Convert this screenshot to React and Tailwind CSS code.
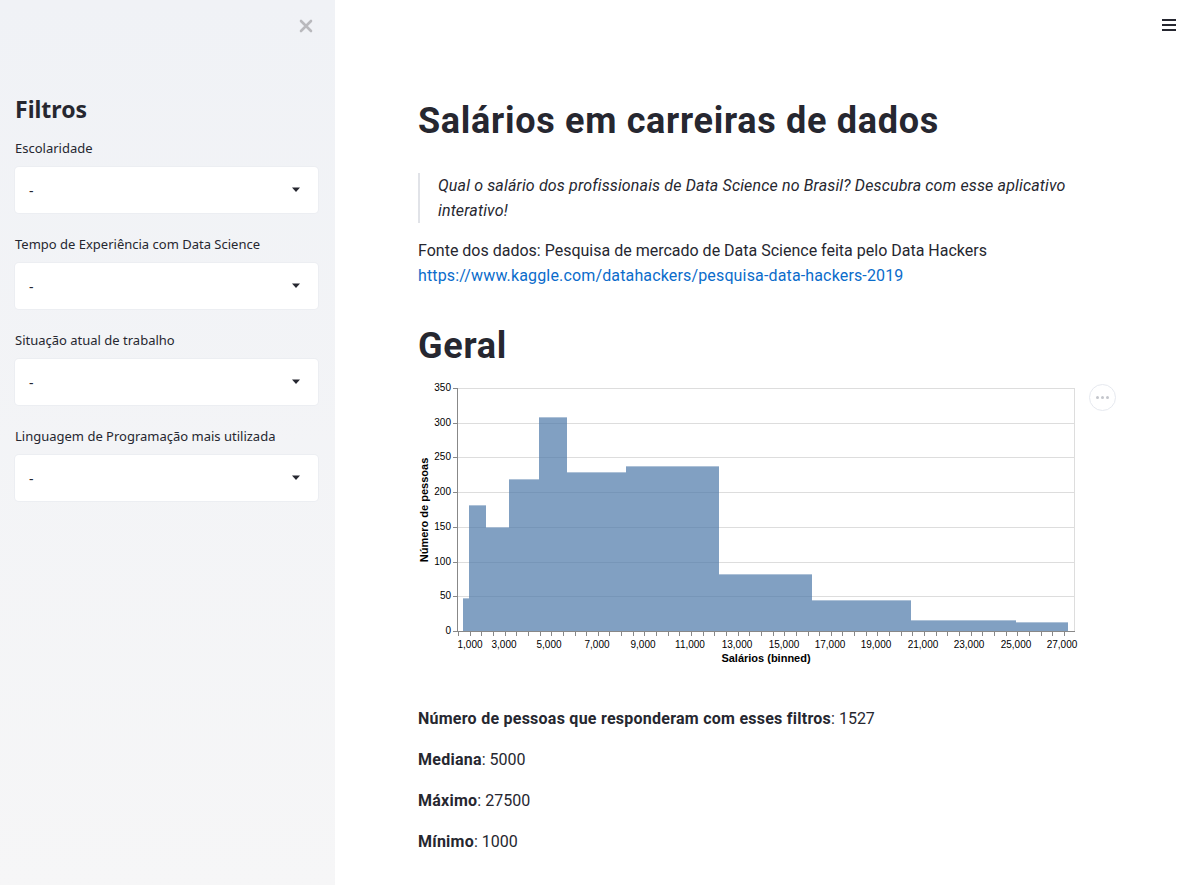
import React from 'react'

const bars = [
  [463, 469, 48],
  [469, 486, 181],
  [486, 509, 150],
  [509, 539, 219],
  [539, 567, 308],
  [567, 626, 229],
  [626, 719, 237],
  [719, 812, 82],
  [812, 911, 45],
  [911, 1016, 16],
  [1016, 1068, 13],
]

const ox = 418
const oy = 380
const y0 = 631 - oy
const ky = 243 / 350
const px = (x) => x - ox

const Select = ({ label }) => (
  <div className="flex flex-col">
    <label className="text-[13px] text-[#262730] leading-4 mb-[11px]">{label}</label>
    <div className="h-[46px] bg-white rounded-[4px] flex items-center justify-between pl-[14px] pr-[17px] text-[14px] text-[#262730] shadow-[0_0_0_1px_#eceef2]">
      <span>-</span>
      <svg width="10" height="6" viewBox="0 0 10 6"><path d="M1 0.5h8L5 5z" fill="#262730" /></svg>
    </div>
  </div>
)

const Chart = () => {
  const grid = [0, 50, 100, 150, 200, 250, 300, 350]
  const ticks = []
  for (let i = 0; i <= 52; i++) ticks.push(Math.round(458 + i * 11.65) + 0.5)
  const labels = [1000, 3000, 5000, 7000, 9000, 11000, 13000, 15000, 17000, 19000, 21000, 23000, 25000, 27000]
  const lx = [470, 504, 549, 597, 643, 690, 737, 784, 830, 876, 923, 969, 1016, 1062]
  return (
    <div className="relative h-[290px] mt-[10px]">
      <svg width="700" height="290" className="block" style={{ fontFamily: 'Liberation Sans, Arial, sans-serif' }}>
        {grid.map((v) => (
          <line key={v} x1={px(457)} x2={px(1075)} y1={Math.round(y0 - v * ky) + 0.5} y2={Math.round(y0 - v * ky) + 0.5} stroke="#ddd" strokeWidth="1" />
        ))}
        <line x1={px(1074.5)} x2={px(1074.5)} y1={y0 - 350 * ky} y2={y0} stroke="#ddd" />
        {bars.map(([a, b, v], i) => (
          <g key={i}>
            <rect x={px(a)} y={Math.round(y0 - v * ky)} width={b - a} height={y0 - Math.round(y0 - v * ky)} fill="#4c78a8" fillOpacity="0.7" />
            <line x1={px(a)} x2={px(b)} y1={Math.round(y0 - v * ky) + 0.5} y2={Math.round(y0 - v * ky) + 0.5} stroke="#fff" strokeOpacity="0.35" />
          </g>
        ))}
        <line x1={px(457.5)} x2={px(457.5)} y1={y0 - 350 * ky} y2={y0} stroke="#888" />
        <line x1={px(457)} x2={px(1075)} y1={y0 + 0.5} y2={y0 + 0.5} stroke="#888" />
        {grid.map((v) => (
          <g key={v}>
            <line x1={px(453)} x2={px(457)} y1={Math.round(y0 - v * ky) + 0.5} y2={Math.round(y0 - v * ky) + 0.5} stroke="#888" />
            <text x={px(451)} y={y0 - v * ky + 3} textAnchor="end" fontSize="10" fill="#000">{v}</text>
          </g>
        ))}
        {ticks.map((t, i) => (
          <line key={i} x1={px(t)} x2={px(t)} y1={y0} y2={y0 + 5} stroke="#888" />
        ))}
        {labels.map((l, i) => (
          <text key={l} x={px(lx[i])} y={y0 + 17} textAnchor="middle" fontSize="10" fill="#000">{l.toLocaleString('en-US')}</text>
        ))}
        <text x={px(766)} y={y0 + 31} textAnchor="middle" fontSize="11" fontWeight="bold" fill="#000">Salários (binned)</text>
        <text transform={`translate(${px(428)} ${510 - oy}) rotate(-90)`} textAnchor="middle" fontSize="11" fontWeight="bold" fill="#000">Número de pessoas</text>
      </svg>
      <div className="absolute left-[671px] top-[4px] w-[27px] h-[27px] rounded-full border border-[#e6e9ef] bg-white flex items-center justify-center gap-[2px]">
        <span className="w-[3px] h-[3px] rounded-full bg-[#c4c6cc]" />
        <span className="w-[3px] h-[3px] rounded-full bg-[#c4c6cc]" />
        <span className="w-[3px] h-[3px] rounded-full bg-[#c4c6cc]" />
      </div>
    </div>
  )
}

export default function App() {
  return (
    <div className="flex w-[1197px] h-[885px] overflow-hidden bg-white text-[#262730]" style={{ fontFamily: 'Roboto, "Noto Sans", sans-serif' }}>
      <aside className="w-[335px] shrink-0 h-full bg-gradient-to-b from-[#f0f2f6] to-[#f6f6f7] flex flex-col px-[16px]" style={{ fontFamily: '"Noto Sans", Roboto, sans-serif' }}>
        <div className="flex justify-end h-[52px] pt-[19px] pr-[6px]">
          <svg width="14" height="14" viewBox="0 0 14 14"><path d="M2 2l10 10M12 2L2 12" stroke="#b9b9bd" strokeWidth="2.6" strokeLinecap="round" /></svg>
        </div>
        <h2 className="mt-[41px] text-[23px] font-bold leading-8 text-[#262730] -ml-[1px]">Filtros</h2>
        <div className="mt-[15px] flex flex-col gap-[23px] -ml-[1px] mr-[1px]">
          <Select label="Escolaridade" />
          <Select label="Tempo de Experiência com Data Science" />
          <Select label="Situação atual de trabalho" />
          <Select label="Linguagem de Programação mais utilizada" />
        </div>
      </aside>
      <main className="relative flex-1 h-full">
        <button className="absolute right-[21px] top-[19px] flex flex-col gap-[3px]">
          <span className="block w-[14px] h-[2px] bg-[#262730]" />
          <span className="block w-[14px] h-[2px] bg-[#262730]" />
          <span className="block w-[14px] h-[2px] bg-[#262730]" />
        </button>
        <div className="ml-[83px] w-[700px] pt-[97px]">
          <h1 className="text-[36px] font-bold leading-[48px] tracking-[0.7px]">Salários em carreiras de dados</h1>
          <blockquote className="mt-[28px] border-l-2 border-[#e1e3e8] pl-[18px] text-[16px] italic leading-[25px] pr-[30px] tracking-[0.15px]">
            Qual o salário dos profissionais de Data Science no Brasil? Descubra com esse aplicativo interativo!
          </blockquote>
          <p className="mt-[15px] text-[16px] leading-[25px]">
            Fonte dos dados: Pesquisa de mercado de Data Science feita pelo Data Hackers
            <br />
            <a className="text-[#0b6ccb] tracking-[0.15px]">https://www.kaggle.com/datahackers/pesquisa-data-hackers-2019</a>
          </p>
          <h2 className="mt-[34px] text-[36px] font-bold leading-[48px] tracking-[0.7px]">Geral</h2>
          <Chart />
          <div className="mt-[36px] flex flex-col gap-[16px] text-[16px] leading-[25px]">
            <p><b className="tracking-[0.25px]">Número de pessoas que responderam com esses filtros</b>: 1527</p>
            <p><b className="tracking-[0.25px]">Mediana</b>: 5000</p>
            <p><b className="tracking-[0.25px]">Máximo</b>: 27500</p>
            <p><b className="tracking-[0.25px]">Mínimo</b>: 1000</p>
          </div>
        </div>
      </main>
    </div>
  )
}
